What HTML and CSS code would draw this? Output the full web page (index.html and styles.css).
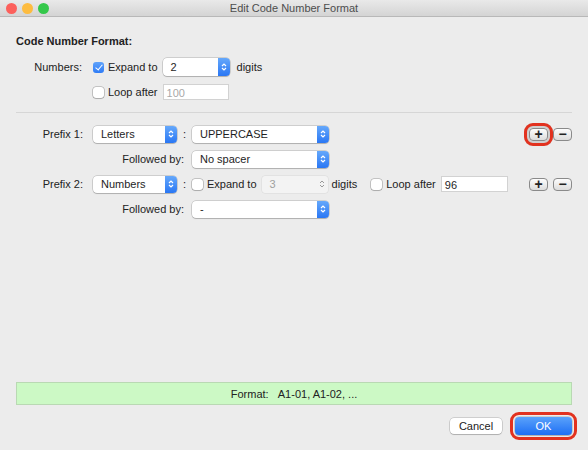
FILE: index.html
```html
<!DOCTYPE html>
<html lang="en">
<head>
  <meta charset="UTF-8" />
  <title>Edit Code Number Format</title>
  <link rel="stylesheet" href="styles.css">
</head>
<body>

<div class="window">
  <div class="titlebar">
    <div class="lights">
      <span class="light red"></span>
      <span class="light yellow"></span>
      <span class="light green"></span>
    </div>
    <span class="title">Edit Code Number Format</span>
  </div>

  <div class="content">
    <div class="heading">Code Number Format:</div>

    <div class="row row-tall">
      <span class="label label-num">Numbers:</span>
      <span class="checkbox checked"></span>
      <span class="check-text">Expand to</span>
      <div class="popup w-num">
        <span class="popup-text">2</span>
        <span class="arrows"><svg width="6" height="10" viewBox="0 0 6 10"><path d="M1 4 L3 2 L5 4 M1 6 L3 8 L5 6" fill="none" stroke="#fff" stroke-width="1.2"/></svg></span>
      </div>
      <span class="after">digits</span>
    </div>

    <div class="row row-loop">
      <span class="label label-num"></span>
      <span class="checkbox"></span>
      <span class="check-text">Loop after</span>
      <div class="field w-num placeholder">100</div>
    </div>

    <div class="separator"></div>

    <div class="row">
      <span class="label label-prefix">Prefix 1:</span>
      <div class="popup w-kind">
        <span class="popup-text">Letters</span>
        <span class="arrows"><svg width="6" height="10" viewBox="0 0 6 10"><path d="M1 4 L3 2 L5 4 M1 6 L3 8 L5 6" fill="none" stroke="#fff" stroke-width="1.2"/></svg></span>
      </div>
      <span class="colon">:</span>
      <div class="popup w-wide">
        <span class="popup-text">UPPERCASE</span>
        <span class="arrows"><svg width="6" height="10" viewBox="0 0 6 10"><path d="M1 4 L3 2 L5 4 M1 6 L3 8 L5 6" fill="none" stroke="#fff" stroke-width="1.2"/></svg></span>
      </div>
      <div class="pm">
        <span class="pm-btn marked">+</span>
        <span class="pm-btn">&minus;</span>
      </div>
    </div>

    <div class="row">
      <span class="label label-follow">Followed by:</span>
      <div class="popup w-wide">
        <span class="popup-text">No spacer</span>
        <span class="arrows"><svg width="6" height="10" viewBox="0 0 6 10"><path d="M1 4 L3 2 L5 4 M1 6 L3 8 L5 6" fill="none" stroke="#fff" stroke-width="1.2"/></svg></span>
      </div>
    </div>

    <div class="row">
      <span class="label label-prefix">Prefix 2:</span>
      <div class="popup w-kind">
        <span class="popup-text">Numbers</span>
        <span class="arrows"><svg width="6" height="10" viewBox="0 0 6 10"><path d="M1 4 L3 2 L5 4 M1 6 L3 8 L5 6" fill="none" stroke="#fff" stroke-width="1.2"/></svg></span>
      </div>
      <span class="colon">:</span>
      <span class="checkbox"></span>
      <span class="check-text">Expand to</span>
      <div class="stepper">
        <span class="stepper-text">3</span>
        <svg width="6" height="10" viewBox="0 0 6 10"><path d="M1 4 L3 2 L5 4 M1 6 L3 8 L5 6" fill="none" stroke="#9a9a9a" stroke-width="1"/></svg>
      </div>
      <span class="after">digits</span>
      <span class="checkbox loop-check"></span>
      <span class="check-text">Loop after</span>
      <div class="field w-loop">96</div>
      <div class="pm">
        <span class="pm-btn">+</span>
        <span class="pm-btn">&minus;</span>
      </div>
    </div>

    <div class="row">
      <span class="label label-follow">Followed by:</span>
      <div class="popup w-wide">
        <span class="popup-text">-</span>
        <span class="arrows"><svg width="6" height="10" viewBox="0 0 6 10"><path d="M1 4 L3 2 L5 4 M1 6 L3 8 L5 6" fill="none" stroke="#fff" stroke-width="1.2"/></svg></span>
      </div>
    </div>

    <div class="format">Format:&nbsp;&nbsp;&nbsp;A1-01, A1-02, ...</div>

    <div class="buttons">
      <button class="btn">Cancel</button>
      <button class="btn btn-ok">OK</button>
    </div>
  </div>
</div>

</body>
</html>
```

FILE: styles.css
```css
body {
  margin: 0;
  font-family: "Liberation Sans", Arial, sans-serif;
  font-size: 11px;
  color: #222;
  background-color: #ececec;
}

.window {
  width: 588px;
  height: 450px;
  display: flex;
  flex-direction: column;
  background-color: #ececec;
  overflow: hidden;
}

/* title bar */
.titlebar {
  height: 16px;
  flex-shrink: 0;
  display: flex;
  align-items: center;
  position: relative;
  background: linear-gradient(#e9e9e9, #d4d4d4);
  border-bottom: 1px solid #b8b8b8;
}
.lights {
  display: flex;
  gap: 5px;
  padding-left: 6px;
}
.light {
  width: 11px;
  height: 11px;
  border-radius: 50%;
}
.light.red { background-color: #fc605c; }
.light.yellow { background-color: #fdbc40; }
.light.green { background-color: #34c84a; }
.title {
  position: absolute;
  left: 0;
  right: 0;
  text-align: center;
  color: #4d4d4d;
  font-size: 11px;
}

.content {
  flex: 1;
  display: flex;
  flex-direction: column;
  padding: 17px 16px 15px 16px;
}

.heading {
  font-weight: bold;
  line-height: 14px;
  margin-bottom: 10px;
}

.row {
  display: flex;
  align-items: center;
  height: 18px;
  margin-bottom: 7px;
}
.row-tall { margin-bottom: 8px; }
.row-loop { height: 16px; margin-bottom: 0; }

.label {
  text-align: right;
  flex-shrink: 0;
}
.label-num { width: 66px; margin-right: 11px; }
.label-prefix { width: 67px; margin-right: 10px; }
.label-follow { width: 168px; margin-right: 8px; }

.checkbox {
  width: 11px;
  height: 11px;
  flex-shrink: 0;
  background: #fff;
  border-radius: 3px;
  box-shadow: 0 0 0 0.5px rgba(0, 0, 0, 0.35), 0 1px 1px rgba(0, 0, 0, 0.12);
  position: relative;
}
.checkbox.checked {
  background: linear-gradient(#5fa2fa, #2f7cf6);
  box-shadow: none;
}
.checkbox.checked::after {
  content: "";
  position: absolute;
  left: 4px;
  top: 1px;
  width: 3px;
  height: 6px;
  border: solid #fff;
  border-width: 0 1.5px 1.5px 0;
  transform: rotate(40deg);
}
.check-text {
  margin-left: 4px;
  margin-right: 5px;
}

.popup {
  display: flex;
  align-items: center;
  height: 17px;
  background: #fff;
  border-radius: 4px;
  box-shadow: 0 0 0 0.5px rgba(0, 0, 0, 0.25), 0 1px 1px rgba(0, 0, 0, 0.15);
  overflow: hidden;
  flex-shrink: 0;
}
.popup-text {
  flex: 1;
  padding-left: 8px;
  color: #1e1e1e;
}
.arrows {
  width: 12px;
  height: 100%;
  display: flex;
  align-items: center;
  justify-content: center;
  background: linear-gradient(#65a8fb, #2a77f4);
}
.w-num { width: 67px; height: 18px; }
.w-kind { width: 84px; }
.w-wide { width: 137px; }

.colon {
  width: 15px;
  text-align: center;
  flex-shrink: 0;
}

.after { margin-left: 7px; }

.field {
  height: 16px;
  line-height: 16px;
  box-sizing: border-box;
  padding-left: 3px;
  background: #fff;
  border: 1px solid #d2d2d2;
  flex-shrink: 0;
}
.field.w-num { width: 66px; height: 16px; }
.placeholder { color: #a8a8a8; }
.w-loop { width: 67px; color: #1e1e1e; }

.stepper {
  width: 66px;
  height: 17px;
  box-sizing: border-box;
  display: flex;
  align-items: center;
  padding: 0 3px 0 8px;
  background: #f3f3f3;
  border-radius: 3px;
  box-shadow: 0 0 0 0.5px rgba(0, 0, 0, 0.08);
  flex-shrink: 0;
}
.stepper-text {
  flex: 1;
  color: #a0a0a0;
}
.stepper + .after { margin-left: 4px; }

.loop-check { margin-left: 14px; }

.pm {
  margin-left: auto;
  display: flex;
  gap: 5px;
}
.pm-btn {
  width: 19px;
  height: 13px;
  box-sizing: border-box;
  display: flex;
  align-items: center;
  justify-content: center;
  font-size: 14px;
  font-weight: bold;
  line-height: 1;
  color: #222;
  background: linear-gradient(#fdfdfd, #dcdcdc);
  border: 1px solid #8a8a8a;
  border-radius: 4px;
}
.pm-btn.marked {
  outline: 3px solid #e2321f;
  outline-offset: 2px;
  border-radius: 4px;
  box-shadow: 0 0 0 5px rgba(0, 0, 0, 0.12);
}

.separator {
  height: 1px;
  background-color: #d6d6d6;
  margin: 12px 0 12px 0;
}

.format {
  margin-top: auto;
  height: 23px;
  box-sizing: border-box;
  display: flex;
  align-items: center;
  justify-content: center;
  background-color: #ccf9c5;
  border: 1px solid #b9d9b3;
  color: #222;
}

.buttons {
  display: flex;
  justify-content: flex-end;
  align-items: center;
  gap: 13px;
  margin-top: 12px;
  height: 18px;
}
.btn {
  font-family: inherit;
  font-size: 11px;
  height: 16px;
  width: 52px;
  padding: 0;
  color: #222;
  background: #fff;
  border: none;
  border-radius: 4px;
  box-shadow: 0 0 0 0.5px rgba(0, 0, 0, 0.25), 0 1px 1px rgba(0, 0, 0, 0.15);
}
.btn-ok {
  width: 57px;
  height: 18px;
  color: #fff;
  background: linear-gradient(#5aa2fb, #1e6ff4);
  outline: 3px solid #e2321f;
  outline-offset: 2px;
}
```
